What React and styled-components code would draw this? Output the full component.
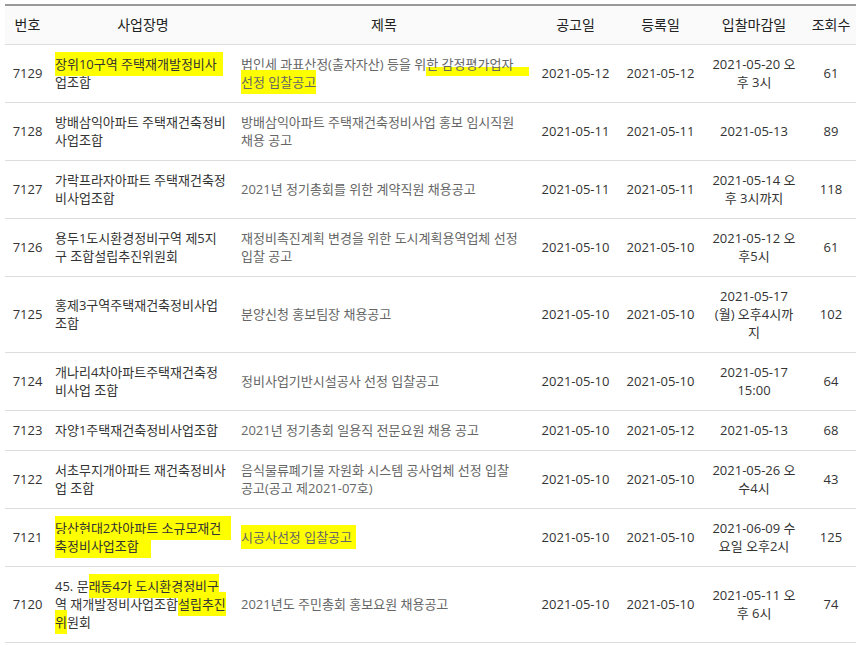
import styled, { createGlobalStyle } from "styled-components";

const GlobalStyle = createGlobalStyle`
  body {
    margin: 0;
    background: #fff;
    font-family: "Open Sans", "Noto Sans CJK KR", sans-serif;
  }
`;

const Wrapper = styled.div`
  padding: 4px 0 0 5px;
`;

const Table = styled.table`
  width: 851px;
  table-layout: fixed;
  border-collapse: collapse;
  border-top: 2px solid #999;
  font-size: 13px;
  line-height: 18px;
`;

const HeadCell = styled.th`
  background: #fafafa;
  color: #222;
  font-size: 14px;
  font-weight: normal;
  padding: 10px 0;
  text-align: center;
  border-bottom: 1px solid #ddd;
`;

const Row = styled.tr`
  border-bottom: 1px solid #ddd;
`;

const Cell = styled.td`
  padding: 10px 5px 11px;
  vertical-align: middle;
  white-space: nowrap;
  text-align: ${(p) => (p.$left ? "left" : "center")};
  color: ${(p) => (p.$muted ? "#666" : "#333")};
`;

const Line = styled.span`
  display: block;
`;

const Mark = styled.span`
  background: ${(p) =>
    p.$low ? "linear-gradient(transparent 55%, #ffff00 55%)" : "#ffff00"};
  padding: ${(p) => (p.$low ? "0 16px 3px 0" : `3px ${p.$pad || 0}px 3px 0`)};
`;

const columns = [
  { title: "번호", width: 45 },
  { title: "사업장명", width: 186 },
  { title: "제목", width: 296 },
  { title: "공고일", width: 87 },
  { title: "등록일", width: 83 },
  { title: "입찰마감일", width: 104 },
  { title: "조회수", width: 50 },
];

const rows = [
  {
    no: 7129,
    site: [<Mark $pad={6}>장위10구역 주택재개발정비사</Mark>, "업조합"],
    title: [
      <>
        법인세 과표산정(출자자산) 등을 위<Mark $low>한 감정평가업자</Mark>
      </>,
      <Mark>선정 입찰공고</Mark>,
    ],
    posted: "2021-05-12",
    reg: "2021-05-12",
    due: ["2021-05-20 오", "후 3시"],
    views: 61,
  },
  {
    no: 7128,
    site: ["방배삼익아파트 주택재건축정비", "사업조합"],
    title: ["방배삼익아파트 주택재건축정비사업 홍보 임시직원", "채용 공고"],
    posted: "2021-05-11",
    reg: "2021-05-11",
    due: ["2021-05-13"],
    views: 89,
  },
  {
    no: 7127,
    site: ["가락프라자아파트 주택재건축정", "비사업조합"],
    title: ["2021년 정기총회를 위한 계약직원 채용공고"],
    posted: "2021-05-11",
    reg: "2021-05-11",
    due: ["2021-05-14 오", "후 3시까지"],
    views: 118,
  },
  {
    no: 7126,
    site: ["용두1도시환경정비구역 제5지", "구 조합설립추진위원회"],
    title: ["재정비촉진계획 변경을 위한 도시계획용역업체 선정", "입찰 공고"],
    posted: "2021-05-10",
    reg: "2021-05-10",
    due: ["2021-05-12 오", "후5시"],
    views: 61,
  },
  {
    no: 7125,
    site: ["홍제3구역주택재건축정비사업", "조합"],
    title: ["분양신청 홍보팀장 채용공고"],
    posted: "2021-05-10",
    reg: "2021-05-10",
    due: ["2021-05-17", "(월) 오후4시까", "지"],
    views: 102,
  },
  {
    no: 7124,
    site: ["개나리4차아파트주택재건축정", "비사업 조합"],
    title: ["정비사업기반시설공사 선정 입찰공고"],
    posted: "2021-05-10",
    reg: "2021-05-10",
    due: ["2021-05-17", "15:00"],
    views: 64,
  },
  {
    no: 7123,
    site: ["자양1주택재건축정비사업조합"],
    title: ["2021년 정기총회 일용직 전문요원 채용 공고"],
    posted: "2021-05-10",
    reg: "2021-05-12",
    due: ["2021-05-13"],
    views: 68,
  },
  {
    no: 7122,
    site: ["서초무지개아파트 재건축정비사", "업 조합"],
    title: ["음식물류폐기물 자원화 시스템 공사업체 선정 입찰", "공고(공고 제2021-07호)"],
    posted: "2021-05-10",
    reg: "2021-05-10",
    due: ["2021-05-26 오", "수4시"],
    views: 43,
  },
  {
    no: 7121,
    site: [
      <Mark $pad={10}>당산현대2차아파트 소규모재건</Mark>,
      <Mark $pad={12}>축정비사업조합</Mark>,
    ],
    title: [<Mark $pad={4}>시공사선정 입찰공고</Mark>],
    posted: "2021-05-10",
    reg: "2021-05-10",
    due: ["2021-06-09 수", "요일 오후2시"],
    views: 125,
  },
  {
    no: 7120,
    site: [
      <>
        45. 문<Mark>래동4가 도시환경정비구</Mark>
      </>,
      <>
        역 재개발정비사업조합<Mark>설립추진</Mark>
      </>,
      <>
        <Mark>위</Mark>원회
      </>,
    ],
    title: ["2021년도 주민총회 홍보요원 채용공고"],
    posted: "2021-05-10",
    reg: "2021-05-10",
    due: ["2021-05-11 오", "후 6시"],
    views: 74,
  },
];

const Lines = ({ items }) =>
  items.map((item, i) => <Line key={i}>{item}</Line>);

export default function App() {
  return (
    <Wrapper>
      <GlobalStyle />
      <Table>
        <colgroup>
          {columns.map((c) => (
            <col key={c.title} style={{ width: c.width }} />
          ))}
        </colgroup>
        <thead>
          <tr>
            {columns.map((c) => (
              <HeadCell key={c.title}>{c.title}</HeadCell>
            ))}
          </tr>
        </thead>
        <tbody>
          {rows.map((r) => (
            <Row key={r.no}>
              <Cell>{r.no}</Cell>
              <Cell $left>
                <Lines items={r.site} />
              </Cell>
              <Cell $left $muted>
                <Lines items={r.title} />
              </Cell>
              <Cell>{r.posted}</Cell>
              <Cell>{r.reg}</Cell>
              <Cell>
                <Lines items={r.due} />
              </Cell>
              <Cell>{r.views}</Cell>
            </Row>
          ))}
        </tbody>
      </Table>
    </Wrapper>
  );
}
